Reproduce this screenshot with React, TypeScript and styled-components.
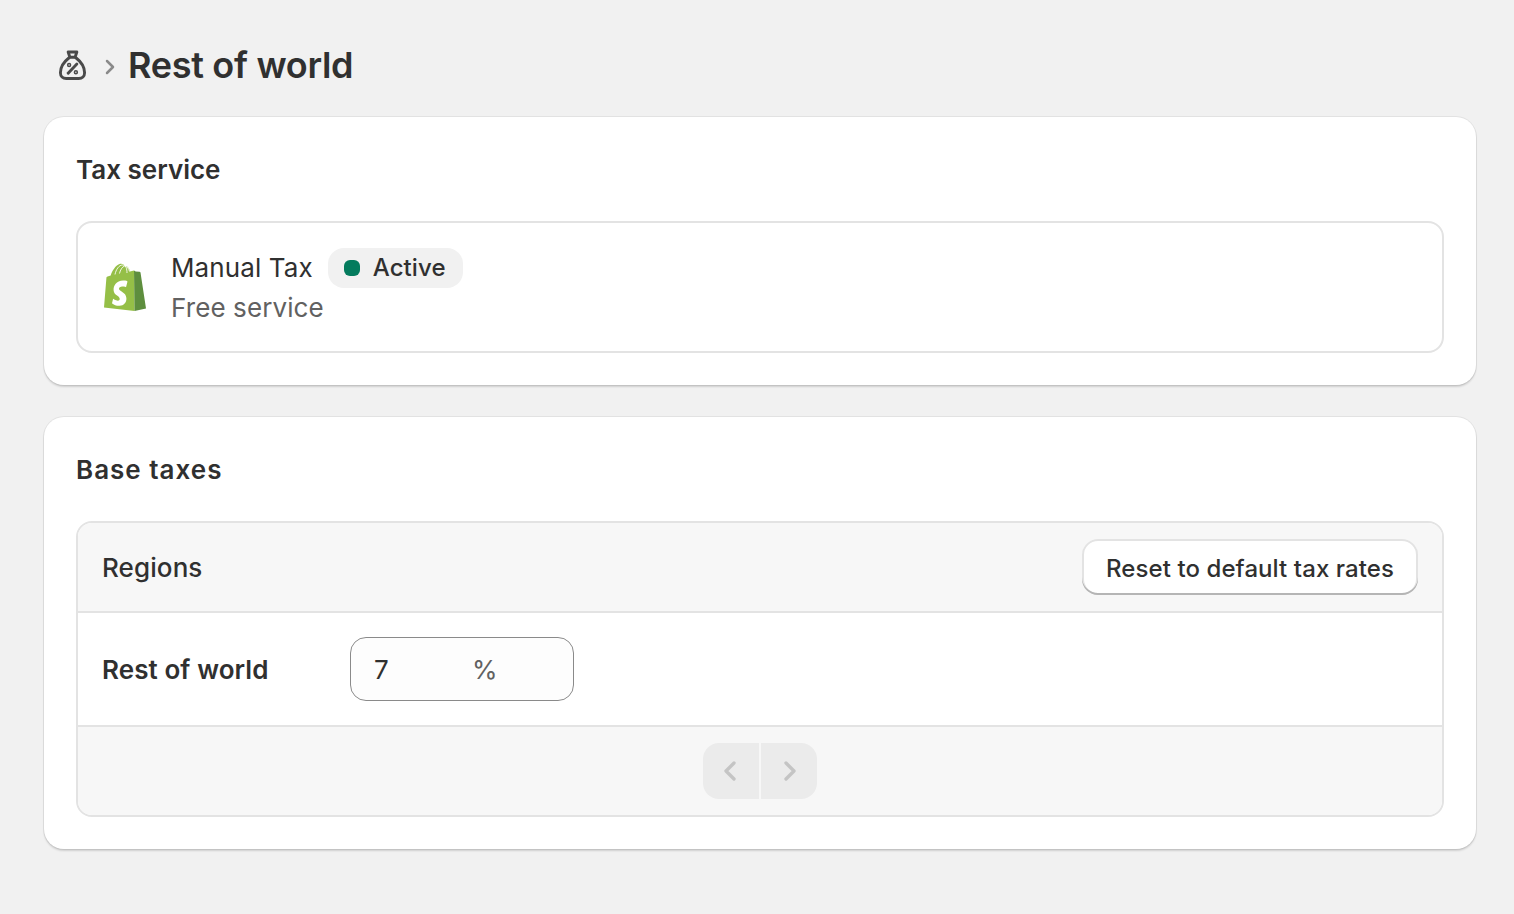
import styled, { createGlobalStyle } from "styled-components";
import { ChevronLeft, ChevronRight } from "lucide-react";

const GlobalStyle = createGlobalStyle`
  html, body {
    margin: 0;
    padding: 0;
    background: #f1f1f1;
    font-family: "Inter", "Liberation Sans", sans-serif;
    color: #303030;
  }
`;

const Page = styled.div`
  box-sizing: border-box;
  height: 914px;
  padding: 43px 38px 0 44px;
  display: flex;
  flex-direction: column;
  overflow: hidden;
`;

const PageHeader = styled.div`
  display: flex;
  align-items: center;
  height: 44px;
  margin-bottom: 30px;
  padding-left: 13px;
  color: #4a4a4a;
`;

const Crumb = styled.div`
  display: flex;
  width: 30px;
  height: 34px;
  align-items: center;
  justify-content: center;
`;

const CrumbArrow = styled.div`
  box-sizing: border-box;
  display: flex;
  width: 41px;
  padding: 3px 0 0 5px;
  justify-content: center;
  color: #8a8a8a;
`;

const PageTitle = styled.h1`
  margin: 0;
  font-size: 36px;
  line-height: 44px;
  font-weight: 600;
  letter-spacing: -0.3px;
  color: #303030;
`;

const Card = styled.section`
  background: #fff;
  border-radius: 20px;
  padding: 32px;
  margin-bottom: 32px;
  box-shadow: 0 0 0 1px rgba(0, 0, 0, 0.06), 0 2px 2px rgba(0, 0, 0, 0.14);
`;

const CardTitle = styled.h2<{ $tracking?: number }>`
  margin: 0 0 30px;
  font-size: 26px;
  line-height: 42px;
  font-weight: 600;
  letter-spacing: ${(p) => p.$tracking ?? 0}px;
  color: #303030;
`;

const Service = styled.div`
  box-sizing: border-box;
  display: flex;
  align-items: center;
  height: 132px;
  padding: 0 26px;
  border: 2px solid #e3e3e3;
  border-radius: 16px;
`;

const ServiceText = styled.div`
  margin-left: 25px;
  padding-top: 2px;
`;

const ServiceName = styled.div`
  display: flex;
  align-items: center;
  font-size: 26px;
  line-height: 40px;
  letter-spacing: 0.1px;
  color: #303030;
`;

const Note = styled.div`
  font-size: 26px;
  line-height: 40px;
  letter-spacing: 0.1px;
  color: #616161;
`;

const Badge = styled.span`
  display: inline-flex;
  align-items: center;
  gap: 13px;
  height: 40px;
  margin-left: 15px;
  padding: 0 17px 0 16px;
  border-radius: 16px;
  background: #f1f1f1;
  font-size: 24px;
  font-weight: 500;
`;

const Dot = styled.i`
  width: 16px;
  height: 16px;
  border-radius: 6px;
  background: #047b5d;
`;

const Table = styled.div`
  border: 2px solid #e3e3e3;
  border-radius: 16px;
  overflow: hidden;
`;

const TableHead = styled.div`
  box-sizing: border-box;
  display: flex;
  align-items: center;
  justify-content: space-between;
  height: 90px;
  padding: 0 24px;
  background: #f7f7f7;
  border-bottom: 2px solid #e3e3e3;
  font-size: 26px;
  font-weight: 500;
  letter-spacing: 0.1px;
`;

const ResetButton = styled.button`
  height: 56px;
  padding: 2px 24px 0;
  border: 0;
  border-radius: 16px;
  background: #fff;
  box-shadow: inset 0 -2px 0 #b5b5b5, inset 0 0 0 2px #e3e3e3;
  font: 500 24px "Inter", sans-serif;
  letter-spacing: 0.08px;
  color: #303030;
`;

const TableRow = styled.div`
  box-sizing: border-box;
  display: flex;
  align-items: center;
  height: 114px;
  padding: 0 24px;
  border-bottom: 2px solid #e3e3e3;
`;

const RowLabel = styled.div`
  width: 248px;
  font-size: 26px;
  font-weight: 600;
  letter-spacing: 0.08px;
`;

const RateField = styled.div`
  box-sizing: border-box;
  display: flex;
  align-items: center;
  width: 224px;
  height: 64px;
  padding-left: 23px;
  border: 1px solid #8a8a8a;
  border-radius: 16px;
  background: #fdfdfd;
  font-size: 26px;
`;

const RateValue = styled.span`
  width: 98px;
`;

const RateUnit = styled.span`
  color: #616161;
`;

const TableFoot = styled.div`
  display: flex;
  justify-content: center;
  align-items: center;
  gap: 2px;
  height: 88px;
  background: #f7f7f7;
`;

const PagerButton = styled.div<{ $side: "left" | "right" }>`
  box-sizing: border-box;
  display: flex;
  align-items: center;
  justify-content: center;
  width: 56px;
  height: 56px;
  padding: ${(p) => (p.$side === "left" ? "0 3px 0 0" : "0 0 0 1px")};
  background: #ebebeb;
  color: #c4c4c4;
  border-radius: ${(p) => (p.$side === "left" ? "16px 0 0 16px" : "0 16px 16px 0")};
`;

function TaxBagIcon() {
  return (
    <svg width="29" height="31" viewBox="0 0 30 32" fill="none" stroke="currentColor" strokeWidth="3" strokeLinecap="round" strokeLinejoin="round">
      <path d="M10.500 2h9l-1.800 5.500h-5.400z" />
      <path d="M11.500 8C7 11.500 2.500 17.500 2.500 23.500c0 3.500 2.500 6 6 6h13c3.500 0 6-2.500 6-6 0-6-4.500-12-9-15.500" />
      <path d="M19.500 14.500l-9 9.500" />
      <circle cx="11.500" cy="15.500" r="0.800" />
      <circle cx="18.500" cy="23" r="0.800" />
    </svg>
  );
}

function ShopifyLogo() {
  return (
    <svg width="42" height="48" viewBox="0 0 42 48">
      <path fill="#95bf47" d="M30 7.500 26 8.500C25.200 5 23.500 3 21 3c-1.500-2-3.500-2.800-5.500-2C11.500 2.500 8 8 6.700 12.500L3.600 13.500C2.700 13.800 2.500 14 2.400 15L0 44.500 30.500 48z" />
      <path fill="#5e8e3e" d="M30.500 48 42 45.500 36.500 9.500c-.1-.6-.6-.8-1-.8l-3.800-.2-1.700-1z" />
      <path fill="none" stroke="#fff" strokeWidth="1" opacity=".85" d="M11 11.500C12 6.500 15 2 18.500 2c3.500 0 4.500 4 4.500 8M15.500 10.500c.8-3.500 2.500-6.500 5-7.500 3 .5 4.500 3 5 5.500" />
      <path fill="#fff" d="M23.500 18.500 22 24.300s-1.900-.9-4-.7c-2.900.2-3 2-3 2.500.2 2.500 7 3 7.400 8.900.3 4.600-2.700 7.600-6.800 7.800-4.900.3-7.600-2.500-7.600-2.500l1.100-4.500s2.700 2 4.800 1.900c1.400-.1 1.900-1.200 1.800-2-.2-3.300-5.700-3.100-6.100-8.500-.3-4.500 2.700-9.300 9.500-9.700 2.700-.2 3.400.3 3.400.3z" />
    </svg>
  );
}

export default function App() {
  return (
    <Page>
      <GlobalStyle />
      <PageHeader>
        <Crumb>
          <TaxBagIcon />
        </Crumb>
        <CrumbArrow>
          <ChevronRight size={24} strokeWidth={2.5} />
        </CrumbArrow>
        <PageTitle>Rest of world</PageTitle>
      </PageHeader>

      <Card>
        <CardTitle>Tax service</CardTitle>
        <Service>
          <ShopifyLogo />
          <ServiceText>
            <ServiceName>
              Manual Tax
              <Badge>
                <Dot />
                Active
              </Badge>
            </ServiceName>
            <Note>Free service</Note>
          </ServiceText>
        </Service>
      </Card>

      <Card>
        <CardTitle $tracking={1}>Base taxes</CardTitle>
        <Table>
          <TableHead>
            Regions
            <ResetButton>Reset to default tax rates</ResetButton>
          </TableHead>
          <TableRow>
            <RowLabel>Rest of world</RowLabel>
            <RateField>
              <RateValue>7</RateValue>
              <RateUnit>%</RateUnit>
            </RateField>
          </TableRow>
          <TableFoot>
            <PagerButton $side="left">
              <ChevronLeft size={32} strokeWidth={2.5} />
            </PagerButton>
            <PagerButton $side="right">
              <ChevronRight size={32} strokeWidth={2.5} />
            </PagerButton>
          </TableFoot>
        </Table>
      </Card>
    </Page>
  );
}
